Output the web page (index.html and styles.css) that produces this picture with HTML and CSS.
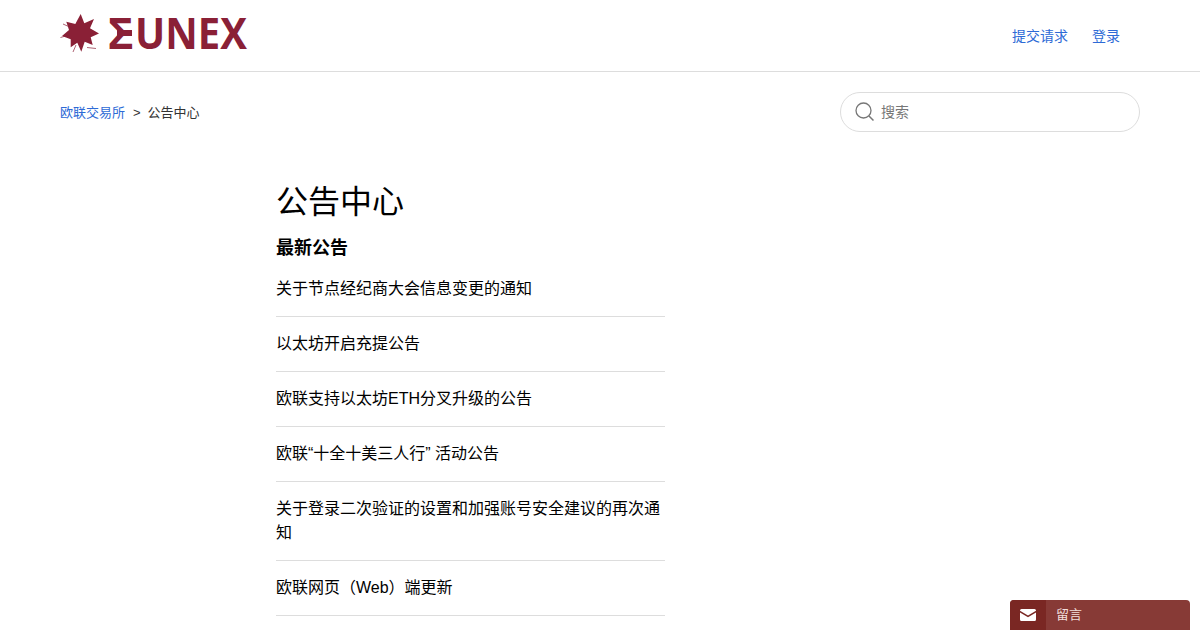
FILE: index.html
```html
<!DOCTYPE html>
<html lang="zh-CN">
<head>
<meta charset="utf-8">
<title>公告中心</title>
<link rel="stylesheet" href="styles.css">
</head>
<body>
<header class="header">
  <a class="logo" href="#">
    <svg class="logo-star" width="40" height="42" viewBox="0 0 40 42" aria-hidden="true">
      <path class="star-fill" d="M20.700 2 L24.300 11.300 L34 7 L30 16.300 L39 21.500 L30.700 25.300 L32.700 33 L24.700 29.700 L21.300 39.700 L17.300 30.700 L10.700 35.300 L10.700 27.300 L2 24 L9 18 L6.300 9.700 L15.300 12 Z"/>
      <path class="star-ray" d="M0.500 25.500 L9 23 M3 12 L12 16 M27 35.500 L36 36.500 M13 40 L16 33"/>
    </svg>
    <span class="logo-text"><span class="logo-sigma">Σ</span><span class="logo-rest">UNEX</span></span>
  </a>
  <nav class="nav">
    <a href="#">提交请求</a>
    <a href="#">登录</a>
  </nav>
</header>
<div class="subnav">
  <ol class="crumbs">
    <li><a href="#">欧联交易所</a></li>
    <li class="sep">&gt;</li>
    <li>公告中心</li>
  </ol>
  <div class="search">
    <svg width="20" height="20" viewBox="0 0 20 20" aria-hidden="true">
      <circle cx="8.500" cy="8.500" r="7.500" fill="none" stroke="#777" stroke-width="1.300"/>
      <path d="M14 14l4.500 4.500" stroke="#777" stroke-width="1.500" fill="none"/>
    </svg>
    <span class="placeholder">搜索</span>
  </div>
</div>
<main class="main">
  <h1>公告中心</h1>
  <h2>最新公告</h2>
  <ul class="list">
    <li><a href="#">关于节点经纪商大会信息变更的通知</a></li>
    <li><a href="#">以太坊开启充提公告</a></li>
    <li><a href="#">欧联支持以太坊ETH分叉升级的公告</a></li>
    <li><a href="#">欧联“十全十美三人行” 活动公告</a></li>
    <li><a href="#">关于登录二次验证的设置和加强账号安全建议的再次通知</a></li>
    <li><a href="#">欧联网页（Web）端更新</a></li>
  </ul>
</main>
<button class="widget">
  <span class="widget-icon">
    <svg width="16" height="12" viewBox="0 0 16 12" aria-hidden="true">
      <path fill="#fff" d="M1.500 0h13A1.500 1.500 0 0 1 16 1.500v.3L8 6.500 0 1.800v-.3A1.500 1.500 0 0 1 1.500 0z"/>
      <path fill="#fff" d="M0 3.600 8 8.300l8-4.700v6.900a1.500 1.500 0 0 1-1.500 1.500h-13A1.500 1.500 0 0 1 0 10.500z"/>
    </svg>
  </span>
  <span class="widget-label">留言</span>
</button>
</body>
</html>
```
FILE: styles.css
```css
* { box-sizing: border-box; }
html, body { margin: 0; height: 630px; overflow: hidden; }
body {
  background: #fff;
  color: #000;
  font-family: "Liberation Sans", "Noto Sans CJK SC", sans-serif;
  font-size: 15px;
  position: relative;
}
a { color: inherit; text-decoration: none; }
.header {
  height: 72px;
  border-bottom: 1px solid #ddd;
  padding: 0 80px 0 60px;
  display: flex;
  justify-content: space-between;
  align-items: center;
}
.logo { display: flex; align-items: center; gap: 8px; margin-top: -6px; color: #8a2036; }
.star-fill { fill: #8a2036; }
.star-ray { stroke: #8a2036; stroke-width: .7; fill: none; }
.logo-text {
  display: flex;
  font-family: "Open Sans", sans-serif;
  font-weight: 700;
  font-size: 43px;
  line-height: 34px;
}
.logo-sigma { position: relative; width: 27px; }
.logo-sigma::after {
  content: "";
  position: absolute;
  left: 9px;
  top: 14px;
  width: 15px;
  height: 6px;
  background: #8a2036;
}
.logo-rest { transform: scaleX(.93); transform-origin: left center; width: 116px; }
.nav { display: flex; gap: 24px; font-size: 14px; color: #2d6ad6; margin-top: -2px; }
.subnav {
  display: flex;
  justify-content: space-between;
  align-items: center;
  padding: 20px 60px 0;
}
.crumbs {
  list-style: none; margin: 2px 0 0; padding: 0;
  display: flex; gap: 8px; align-items: center;
  font-size: 13px; line-height: 20px; color: #333;
}
.crumbs a { color: #2d6ad6; }
.sep { margin-right: -1px; }
.search {
  width: 300px; height: 40px;
  border: 1px solid #ddd; border-radius: 20px;
  display: flex; align-items: center; gap: 6px;
  padding-left: 14px;
}
.placeholder { font-size: 14px; color: #777; margin-top: -2px; }
.main { width: 389px; margin-left: 276px; padding-top: 48px; }
h1 { margin: 0; font-weight: 400; font-size: 32px; line-height: 44px; }
h2 { margin: 12px 0 0; font-weight: 700; font-size: 18px; line-height: 24px; }
.list { list-style: none; margin: 0; padding: 0; font-size: 16px; line-height: 24px; }
.list li { padding: 15px 0 15px; border-bottom: 1px solid #ddd; }
.list li:first-child { padding-top: 17px; }
.widget {
  position: absolute; right: 10px; bottom: 0;
  width: 180px; height: 30px;
  border: 0; padding: 0;
  border-radius: 4px 4px 0 0;
  background: #873a36; color: #fff;
  display: flex; align-items: center;
  font: 13px "Liberation Sans", "Noto Sans CJK SC", sans-serif;
  overflow: hidden;
}
.widget-icon { width: 36px; height: 30px; background: #7a2723; display: flex; align-items: center; justify-content: center; }
.widget-label { margin-left: 10px; margin-top: -4px; color: #f2dfdd; }
```
